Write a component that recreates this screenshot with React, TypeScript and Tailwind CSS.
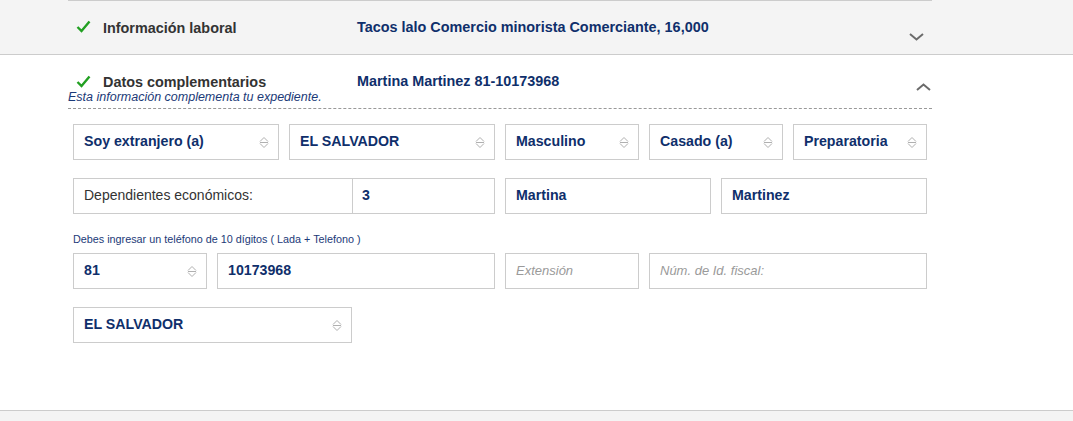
import React from "react";

const NAVY = "text-[#0f2f6b]";

function Check() {
  return (
    <svg width="15" height="13" viewBox="0 0 15 13" className="shrink-0">
      <path d="M1.5 7 L5.5 11 L13.5 1.5" fill="none" stroke="#22a022" strokeWidth="2.4" strokeLinecap="butt" strokeLinejoin="miter" />
    </svg>
  );
}

function ChevronDown() {
  return (
    <svg width="15" height="8" viewBox="0 0 15 8">
      <path d="M1 1 L7.5 6.5 L14 1" fill="none" stroke="#6b6b6b" strokeWidth="2" />
    </svg>
  );
}

function ChevronUp() {
  return (
    <svg width="15" height="8" viewBox="0 0 15 8">
      <path d="M1 7 L7.5 1.5 L14 7" fill="none" stroke="#6b6b6b" strokeWidth="2" />
    </svg>
  );
}

function Arrows() {
  return (
    <svg width="10" height="13" viewBox="0 0 10 13" className="shrink-0">
      <path d="M1 5.5 L5 1.5 L9 5.5" fill="none" stroke="#b0b0b0" strokeWidth="1" />
      <line x1="1" y1="6.5" x2="9" y2="6.5" stroke="#b0b0b0" strokeWidth="1" />
      <path d="M1 7.5 L5 11.5 L9 7.5" fill="none" stroke="#b0b0b0" strokeWidth="1" />
    </svg>
  );
}

function Select({ w, text }: { w: string; text: string }) {
  return (
    <div className={`${w} h-[36px] border border-[#cccccc] bg-white flex items-center justify-between pl-[10px] pr-[9px]`}>
      <span className={`text-[14.2px] font-bold ${NAVY}`}>{text}</span>
      <Arrows />
    </div>
  );
}

function Input({ w, text, placeholder }: { w: string; text?: string; placeholder?: string }) {
  return (
    <div className={`${w} h-[36px] border border-[#cccccc] bg-white flex items-center px-[10px]`}>
      {text ? (
        <span className={`text-[14.2px] font-bold ${NAVY}`}>{text}</span>
      ) : (
        <span className="text-[13px] italic text-[#9a9a9a]">{placeholder}</span>
      )}
    </div>
  );
}

export default function App() {
  return (
    <div className="w-full h-[421px] bg-white overflow-hidden" style={{ fontFamily: '"Liberation Sans", Arial, sans-serif' }}>
      {/* Section 1 */}
      <div className="h-[55px] bg-[#f4f4f4] border-b border-[#cccccc]">
        <div className="ml-[68px] w-[864px] h-full border-t border-[#cccccc] flex items-start">
          <div className="w-[35px] pl-[8px] pt-[19px]">
            <Check />
          </div>
          <div className="w-[254px] pt-[18px] text-[14.4px] font-bold text-[#333333] leading-[18px]">Información laboral</div>
          <div className={`pt-[17px] text-[14.4px] font-bold ${NAVY} leading-[18px] flex-1`}>Tacos lalo Comercio minorista Comerciante, 16,000</div>
          <div className="pt-[32px] pr-[8px]">
            <ChevronDown />
          </div>
        </div>
      </div>

      {/* Section 2 */}
      <div className="h-[356px] border-b border-[#cccccc] bg-white">
        <div className="ml-[68px] w-[864px] border-b border-dashed border-[#999999] pb-[4px]">
          <div className="flex items-start pt-[18px]">
            <div className="w-[35px] pl-[8px] pt-[2px]">
              <Check />
            </div>
            <div className="w-[254px] text-[14.4px] font-bold text-[#333333] leading-[18px]">Datos complementarios</div>
            <div className={`text-[14.4px] font-bold ${NAVY} leading-[18px] flex-1 -mt-[1px]`}>Martina Martinez 81-10173968</div>
            <div className="pt-[10px] pr-[1px]">
              <ChevronUp />
            </div>
          </div>
          <div className="text-[12.5px] italic text-[#1b3a78] leading-[14px] -mt-[1px]">Esta información complementa tu expediente.</div>
        </div>

        <div className="ml-[73px] w-[854px] flex flex-col">
          <div className="flex gap-[10px] mt-[15px]">
            <Select w="w-[206px]" text="Soy extranjero (a)" />
            <Select w="w-[206px]" text="EL SALVADOR" />
            <Select w="w-[134px]" text="Masculino" />
            <Select w="w-[134px]" text="Casado (a)" />
            <Select w="w-[134px]" text="Preparatoria" />
          </div>

          <div className="flex gap-[10px] mt-[18px]">
            <div className="w-[422px] h-[36px] border border-[#cccccc] flex">
              <div className="w-[279px] border-r border-[#cccccc] flex items-center pl-[10px] pb-[2px] text-[14px] text-[#333333]">Dependientes económicos:</div>
              <div className={`flex-1 flex items-center pl-[9px] text-[14.2px] font-bold ${NAVY}`}>3</div>
            </div>
            <Input w="w-[206px]" text="Martina" />
            <Input w="w-[206px]" text="Martinez" />
          </div>

          <div className="mt-[18px] text-[10.8px] text-[#1b3a78] leading-[14px]">Debes ingresar un teléfono de 10 dígitos ( Lada + Telefono )</div>

          <div className="flex gap-[10px] mt-[7px]">
            <Select w="w-[134px]" text="81" />
            <Input w="w-[278px]" text="10173968" />
            <Input w="w-[134px]" placeholder="Extensión" />
            <Input w="w-[278px]" placeholder="Núm. de Id. fiscal:" />
          </div>

          <div className="flex mt-[18px]">
            <Select w="w-[279px]" text="EL SALVADOR" />
          </div>
        </div>
      </div>
      <div className="h-[10px] bg-[#f4f4f4]" />
    </div>
  );
}
